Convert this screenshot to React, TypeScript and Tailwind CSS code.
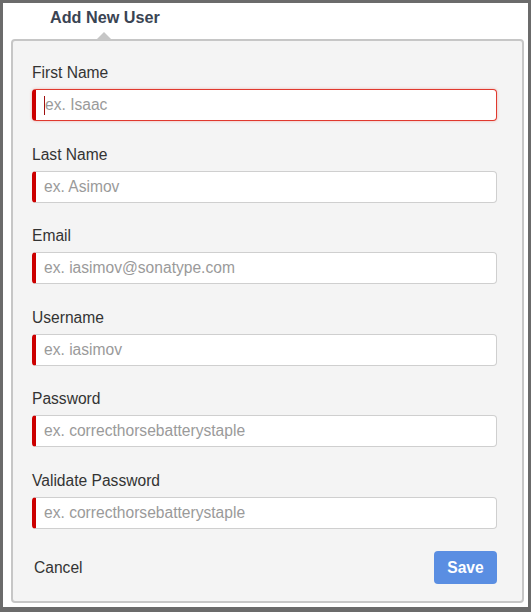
const fields = [
  { label: 'First Name', placeholder: 'ex. Isaac', focused: true },
  { label: 'Last Name', placeholder: 'ex. Asimov' },
  { label: 'Email', placeholder: 'ex. iasimov@sonatype.com' },
  { label: 'Username', placeholder: 'ex. iasimov' },
  { label: 'Password', placeholder: 'ex. correcthorsebatterystaple' },
  { label: 'Validate Password', placeholder: 'ex. correcthorsebatterystaple' },
]

export default function App() {
  return (
    <div
      className="w-[531px] h-[612px] bg-white border-[#6b6b6b] border-t-[3px] border-x-[3px] border-b-[5px] flex flex-col text-[15.6px] text-[#333]"
      style={{ fontFamily: '"Liberation Sans", Arial, sans-serif' }}
    >
      {/* Header with caret */}
      <div className="h-[36px] shrink-0 pl-[47px] flex flex-col">
        <div className="font-bold text-[16.2px] leading-[18px] mt-[5px] text-[#3a4453]">Add New User</div>
        <div className="mt-auto ml-[47px] w-0 h-0 border-x-[7px] border-x-transparent border-b-[7px] border-b-[#c6c6c6]" />
      </div>

      {/* Card */}
      <div className="ml-[8px] mr-[4px] h-[564px] shrink-0 bg-[#f4f4f4] border-2 border-[#c6c6c6] rounded-[4px] pl-[19px] pr-[25px] pt-[23px] flex flex-col">
        <div className="flex flex-col gap-[24.6px]">
          {fields.map((f) => (
            <div key={f.label} className="flex flex-col">
              <label className="leading-[18px] mb-[7px] text-[#333]">{f.label}</label>
              <div className="relative">
                <input
                  placeholder={f.placeholder}
                  className={
                    f.focused
                      ? 'w-full h-[32px] bg-white rounded-[4px] border border-[#e0392e] border-l-[4px] border-l-[#cc0000] pl-[9px] text-[15.6px] outline-none placeholder:text-[#9a9a9a] shadow-[0_0_3px_rgba(224,57,46,0.35)]'
                      : 'w-full h-[32px] bg-white rounded-[4px] border border-[#cfcfcf] border-l-[4px] border-l-[#cc0000] pl-[8px] text-[15.6px] outline-none placeholder:text-[#9a9a9a]'
                  }
                />
                {f.focused && (
                  <span className="absolute left-[12px] top-[7px] w-px h-[19px] bg-[#a01010]" />
                )}
              </div>
            </div>
          ))}
        </div>

        {/* Actions */}
        <div className="mt-[22px] flex items-center justify-between">
          <button className="pl-[2px] text-[15.6px] text-[#333]">Cancel</button>
          <button className="w-[63px] h-[33px] rounded-[4px] bg-[#5a8ee2] text-white font-bold text-[15.6px]">
            Save
          </button>
        </div>
      </div>
    </div>
  )
}
